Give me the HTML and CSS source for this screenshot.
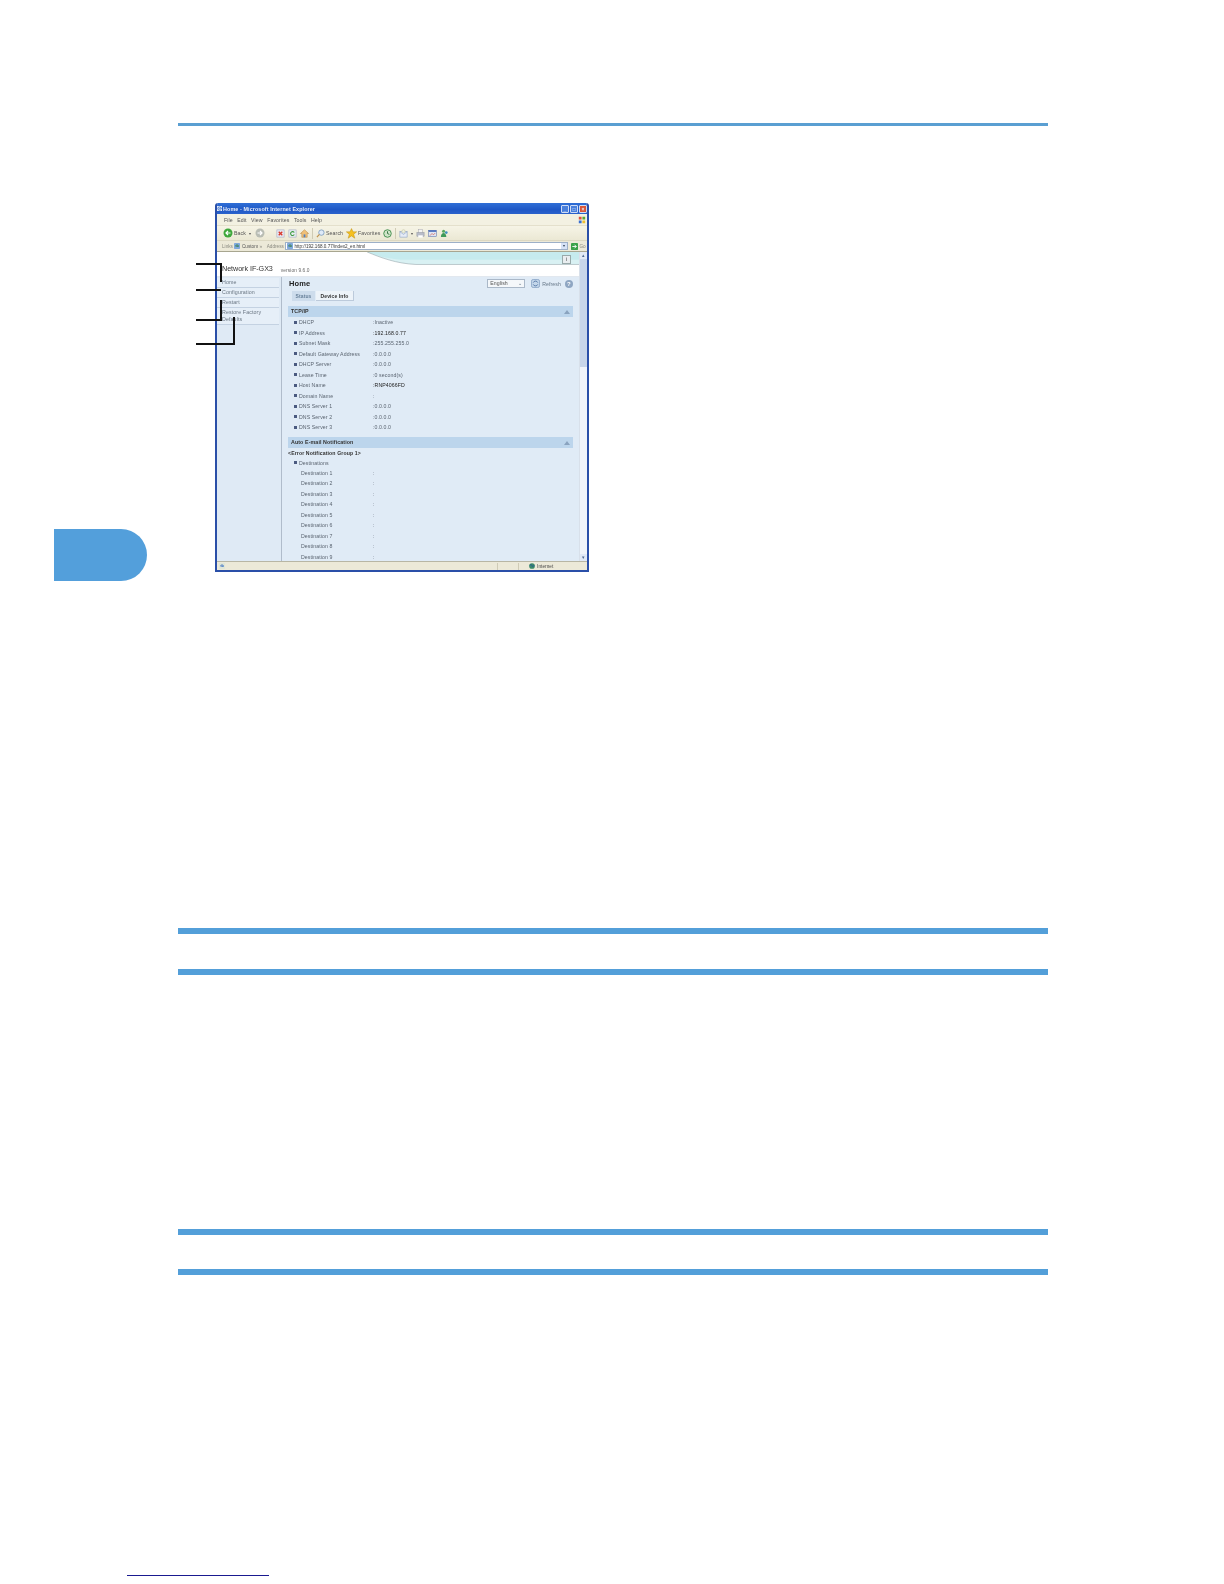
FILE: index.html
```html
<!DOCTYPE html>
<html lang="en">
<head>
    <meta charset="UTF-8">
    <title>Network IF-GX3</title>
    <link rel="stylesheet" href="styles.css">
</head>
<body>
    <div class="sheet">
        <div class="side">
            <div class="chapter-tab"></div>
        </div>
        <div class="content">
            <div class="rule rule-top"></div>
            <div class="figure">
                <div class="callout c1"></div>
                <div class="callout c2"></div>
                <div class="callout c3"></div>
                <div class="callout c4"></div>
                <div class="window">
                    <div class="titlebar">
                        <svg class="ie-mini" viewBox="0 0 8 8"><rect width="8" height="8" fill="#e8eef8"/><path d="M1 4.500a3 3 0 0 1 6 0H2.500M6.500 6a3 3 0 0 1-5-1" fill="none" stroke="#2a62c0" stroke-width="1.200"/></svg>
                        <span class="title-text">Home - Microsoft Internet Explorer</span>
                        <div class="win-btns">
                            <span class="win-btn">_</span>
                            <span class="win-btn">□</span>
                            <span class="win-btn close">×</span>
                        </div>
                    </div>
                    <div class="menubar">
                        <span>File</span><span>Edit</span><span>View</span><span>Favorites</span><span>Tools</span><span>Help</span>
                        <svg class="flag" viewBox="0 0 10 10"><path d="M1 1h3.500v3.500H1z" fill="#e0503a"/><path d="M5.500 1H9v3.500H5.500z" fill="#5aa838"/><path d="M1 5.500h3.500V9H1z" fill="#3a6fd0"/><path d="M5.500 5.500H9V9H5.500z" fill="#f0c030"/></svg>
                    </div>
                    <div class="toolbar">
                        <svg class="tool round" viewBox="0 0 10 10"><circle cx="5" cy="5" r="4.500" fill="#3fa83c"/><path d="M7.500 5H3M5 3 3 5l2 2" fill="none" stroke="#fff" stroke-width="1.200"/></svg>
                        <span class="tool-label">Back</span>
                        <span class="caret">▾</span>
                        <svg class="tool round fwd" viewBox="0 0 10 10"><circle cx="5" cy="5" r="4.500" fill="#b9bdb4"/><path d="M2.500 5H7M5 3l2 2-2 2" fill="none" stroke="#fff" stroke-width="1.200"/></svg>
                        <svg class="tool stop" viewBox="0 0 10 10"><rect x="1" y="1" width="8" height="8" fill="#e9e9f2" stroke="#9aa3c0" stroke-width=".6"/><path d="M3 3l4 4M7 3 3 7" stroke="#d8362a" stroke-width="1.500"/></svg>
                        <svg class="tool" viewBox="0 0 10 10"><rect x="1" y="1" width="8" height="8" fill="#e9eef2" stroke="#9aa3c0" stroke-width=".6"/><path d="M7 4a2.200 2.200 0 1 0 0 2.200" fill="none" stroke="#3c9a40" stroke-width="1.200"/></svg>
                        <svg class="tool" viewBox="0 0 10 10"><path d="M5 .8.500 5H2v4.200h6V5h1.500z" fill="#f0c078" stroke="#b07830" stroke-width=".5"/><rect x="4" y="6" width="2" height="3.200" fill="#5080c0"/></svg>
                        <span class="divider"></span>
                        <svg class="tool" viewBox="0 0 10 10"><circle cx="6" cy="4" r="3" fill="#dfeaf8" stroke="#6a90b8" stroke-width=".8"/><path d="M3.800 6 1 9" stroke="#c09048" stroke-width="1.300"/></svg>
                        <span class="tool-label">Search</span>
                        <svg class="tool star" viewBox="0 0 10 10"><path d="m5 .5 1.400 3H9.700L7 5.600 8 9.300 5 7.200 2 9.300l1-3.700L.3 3.500h3.300z" fill="#f5c020" stroke="#b88a10" stroke-width=".4"/></svg>
                        <span class="tool-label">Favorites</span>
                        <svg class="tool" viewBox="0 0 10 10"><circle cx="5" cy="5" r="4.200" fill="#cfe4c8" stroke="#3c8a48"/><path d="M5 2.500V5l2 1" fill="none" stroke="#2a6a38"/></svg>
                        <span class="divider"></span>
                        <svg class="tool" viewBox="0 0 10 10"><rect x="1" y="3" width="8" height="6" fill="#e6ecf6" stroke="#8098c0" stroke-width=".6"/><path d="m1 3 4 3 4-3" fill="none" stroke="#8098c0" stroke-width=".6"/><circle cx="5" cy="2.500" r="1.800" fill="#eef2e0" stroke="#b0b080" stroke-width=".4"/></svg>
                        <span class="caret">▾</span>
                        <svg class="tool" viewBox="0 0 10 10"><rect x="3" y="0.500" width="4" height="4" fill="#f4f4f4" stroke="#a0a0a8" stroke-width=".5"/><rect x="1" y="4" width="8" height="4" fill="#b8bcc8" stroke="#8a8e9c" stroke-width=".5"/><rect x="2.500" y="7" width="5" height="2.500" fill="#fff"/></svg>
                        <svg class="tool" viewBox="0 0 10 10"><rect x=".8" y="1.500" width="8.400" height="7" fill="#dfe6f4" stroke="#5a70a8" stroke-width=".6"/><rect x=".8" y="1.500" width="8.400" height="1.600" fill="#3a62b8"/><path d="M2 7.500 4.500 5 6 6.500 8 4.500" fill="none" stroke="#d05040" stroke-width=".7"/></svg>
                        <svg class="tool" viewBox="0 0 10 10"><circle cx="4" cy="2.500" r="1.700" fill="#58a860"/><circle cx="7" cy="4" r="1.500" fill="#3f8fc0"/><path d="M1 9c0-3 1.500-4.500 3-4.500S7 6 7 9z" fill="#3f9a5a"/></svg>
                    </div>
                    <div class="addressbar">
                        <span class="addr-label">Links</span>
                        <svg class="tiny" viewBox="0 0 8 8"><rect width="8" height="8" rx="1" fill="#7fa8dc"/><path d="M2 4.500a2 2 0 1 1 4 0H3" fill="none" stroke="#2f7a3a"/></svg>
                        <span class="addr-label dark">Custom</span>
                        <span class="addr-label chev">»</span>
                        <span class="addr-label addr-word">Address</span>
                        <div class="addr-input">
                            <svg class="tiny" viewBox="0 0 8 8"><rect width="8" height="8" rx="1" fill="#7fa8dc"/><path d="M2 4.500a2 2 0 1 1 4 0H3" fill="none" stroke="#2f7a3a"/></svg>
                            <span>http://192.168.0.77/index2_en.html</span>
                            <span class="addr-drop">▾</span>
                        </div>
                        <svg class="go" viewBox="0 0 8 8"><rect width="8" height="8" rx="1" fill="#3aa048"/><path d="M1.500 4H6M4 2l2 2-2 2" fill="none" stroke="#fff"/></svg>
                        <span class="addr-label">Go</span>
                    </div>
                    <div class="viewport">
                        <div class="page">
                            <div class="banner">
                                <svg class="swoosh" viewBox="0 0 364 25" preserveAspectRatio="none">
                                    <path d="M151 0c14 6 29 12 49 13h164V0z" fill="#d9f1f3"/>
                                    <path d="M151 0c10 4 20 7 34 8h179V0z" fill="#c6ebee"/>
                                    <path d="M151 0c14 6 29 12 49 13h164" fill="none" stroke="#9aa8ad" stroke-width=".6"/>
                                </svg>
                                <span class="info-btn">i</span>
                                <span class="product">Network IF-GX3</span>
                                <span class="version">version 9.6.0</span>
                            </div>
                            <div class="split">
                                <div class="nav">
                                    <div class="nav-item">Home</div>
                                    <div class="nav-item">Configuration</div>
                                    <div class="nav-item">Restart</div>
                                    <div class="nav-item">Restore Factory Defaults</div>
                                </div>
                                <div class="main">
                                    <div class="main-head">
                                        <h1>Home</h1>
                                        <span class="lang">English<i>⌄</i></span>
                                        <svg class="refresh" viewBox="0 0 10 10"><rect x=".5" y=".5" width="9" height="9" rx="2" fill="#c3d6ea" stroke="#6f8fb8" stroke-width=".7"/><path d="M7.500 4A2.700 2.700 0 0 0 2.500 4M2.500 6a2.700 2.700 0 0 0 5 0" fill="none" stroke="#4f73a3"/></svg>
                                        <span class="refresh-text">Refresh</span>
                                        <span class="help">?</span>
                                    </div>
                                    <div class="tabs">
                                        <span class="tab">Status</span>
                                        <span class="tab on">Device Info</span>
                                    </div>
                                    <div class="sec-head">TCP/IP<span class="sec-arrow"></span></div>
                                    <div class="row"><b class="sq"></b><span class="key">DHCP</span><span class="val">:Inactive</span></div>
                                    <div class="row"><b class="sq"></b><span class="key">IP Address</span><span class="val strong">:192.168.0.77</span></div>
                                    <div class="row"><b class="sq"></b><span class="key">Subnet Mask</span><span class="val">:255.255.255.0</span></div>
                                    <div class="row"><b class="sq"></b><span class="key">Default Gateway Address</span><span class="val">:0.0.0.0</span></div>
                                    <div class="row"><b class="sq"></b><span class="key">DHCP Server</span><span class="val">:0.0.0.0</span></div>
                                    <div class="row"><b class="sq"></b><span class="key">Lease Time</span><span class="val">:0 second(s)</span></div>
                                    <div class="row"><b class="sq"></b><span class="key">Host Name</span><span class="val strong">:RNP4066FD</span></div>
                                    <div class="row"><b class="sq"></b><span class="key">Domain Name</span><span class="val">:</span></div>
                                    <div class="row"><b class="sq"></b><span class="key">DNS Server 1</span><span class="val">:0.0.0.0</span></div>
                                    <div class="row"><b class="sq"></b><span class="key">DNS Server 2</span><span class="val">:0.0.0.0</span></div>
                                    <div class="row"><b class="sq"></b><span class="key">DNS Server 3</span><span class="val">:0.0.0.0</span></div>
                                    <div class="sec-head second">Auto E-mail Notification<span class="sec-arrow"></span></div>
                                    <div class="group">&lt;Error Notification Group 1&gt;</div>
                                    <div class="row short"><b class="sq"></b><span class="key">Destinations</span></div>
                                    <div class="row sub"><span class="key">Destination 1</span><span class="val">:</span></div>
                                    <div class="row sub"><span class="key">Destination 2</span><span class="val">:</span></div>
                                    <div class="row sub"><span class="key">Destination 3</span><span class="val">:</span></div>
                                    <div class="row sub"><span class="key">Destination 4</span><span class="val">:</span></div>
                                    <div class="row sub"><span class="key">Destination 5</span><span class="val">:</span></div>
                                    <div class="row sub"><span class="key">Destination 6</span><span class="val">:</span></div>
                                    <div class="row sub"><span class="key">Destination 7</span><span class="val">:</span></div>
                                    <div class="row sub"><span class="key">Destination 8</span><span class="val">:</span></div>
                                    <div class="row sub"><span class="key">Destination 9</span><span class="val">:</span></div>
                                </div>
                            </div>
                        </div>
                        <div class="scrollbar">
                            <span class="arrow">▴</span>
                            <div class="thumb"></div>
                            <span class="arrow end">▾</span>
                        </div>
                    </div>
                    <div class="statusbar">
                        <svg class="tiny" viewBox="0 0 8 8"><rect width="8" height="8" fill="#dfe6d8"/><path d="M2 4.500a2 2 0 1 1 4 0H3" fill="none" stroke="#2a62c0"/></svg>
                        <span class="status-cell wide"></span>
                        <span class="status-cell"></span>
                        <span class="status-zone">
                            <svg class="globe" viewBox="0 0 8 8"><circle cx="4" cy="4" r="3.800" fill="#3a8a68"/><path d="M1 3c2-2 3 0 3 1s2 1 3-1" fill="none" stroke="#2a4f9f"/></svg>
                            Internet
                        </span>
                    </div>
                </div>
            </div>
            <div class="rule rule-a"></div>
            <div class="rule rule-b"></div>
            <div class="rule rule-c"></div>
            <div class="rule rule-d"></div>
        </div>
    </div>
    <div class="footnote-line"></div>
</body>
</html>
```

FILE: styles.css
```css
html, body {
    margin: 0;
    padding: 0;
    background: #fff;
}
body {
    font-family: "Liberation Sans", Arial, sans-serif;
    width: 1224px;
    height: 1584px;
    overflow: hidden;
}
.sheet {
    display: flex;
    height: 1575px;
}
.side {
    width: 124px;
    padding-left: 54px;
}
.chapter-tab {
    width: 93px;
    height: 52px;
    margin-top: 529px;
    background: #539fdb;
    border-radius: 0 26px 26px 0;
}
.content {
    width: 870px;
    padding-top: 123px;
}
.rule {
    background: #539fd9;
    height: 6px;
}
.rule-top {
    height: 3px;
    background: #5a9fd2;
}
.rule-a { margin-top: 356px; }
.rule-b { margin-top: 35px; }
.rule-c { margin-top: 254px; }
.rule-d { margin-top: 34px; }
.footnote-line {
    width: 142px;
    height: 1px;
    margin-left: 127px;
    background: #1a1a90;
}

/* screenshot figure */
.figure {
    position: relative;
    margin: 77px 0 0 37px;
    width: 374px;
    height: 369px;
}
.callout {
    position: absolute;
    z-index: 2;
    border: solid #111;
    border-width: 2px 2px 0 0;
}
.c1 { left: -19px; top: 60px; width: 24px; height: 17px; }
.c2 { left: -19px; top: 86px; width: 25px; height: 0; border-right: 0; }
.c3 { left: -19px; top: 97px; width: 24px; height: 19px; border-width: 0 2px 2px 0; }
.c4 { left: -19px; top: 114px; width: 37px; height: 26px; border-width: 0 2px 2px 0; }

.window {
    width: 374px;
    height: 369px;
    box-sizing: border-box;
    display: flex;
    flex-direction: column;
    background: #ece9d8;
    border: solid #2a4fa8;
    border-width: 0 2px 2px;
    border-radius: 3px 3px 0 0;
    font-size: 5.2px;
    letter-spacing: 0.1px;
    color: #555;
    overflow: hidden;
    filter: blur(0.4px);
}
.titlebar {
    display: flex;
    align-items: center;
    height: 11px;
    flex: none;
    margin: 0 -2px;
    padding: 0 2px;
    background: linear-gradient(#2f6fd6, #1f58c6 60%, #2a62cc);
    color: #e8eefa;
    font-weight: bold;
    font-size: 5.4px;
}
.ie-mini { width: 5px; height: 5px; margin-right: 1px; }
.win-btns { margin-left: auto; display: flex; gap: 1px; }
.win-btn {
    width: 8px;
    height: 8px;
    line-height: 7px;
    text-align: center;
    background: #4a80dc;
    border: 1px solid #cfdcf5;
    box-sizing: border-box;
    font-size: 5px;
    border-radius: 1px;
}
.close { background: #d9583a; }
.menubar {
    display: flex;
    align-items: center;
    gap: 4.500px;
    height: 11px;
    flex: none;
    padding-left: 7px;
    background: #f3f1e2;
    color: #555;
}
.flag { width: 8px; height: 8px; margin-left: auto; margin-right: 1px; }
.toolbar {
    display: flex;
    align-items: center;
    gap: 3px;
    height: 15px;
    flex: none;
    padding-left: 6px;
    background: linear-gradient(#f6f4e6, #ebe8d4);
    border-top: 1px solid #e4e0cc;
    box-sizing: border-box;
}
.tool { width: 9px; height: 9px; flex: none; }
.tool.round { width: 10px; height: 10px; }
.tool.fwd { margin-left: 1px; margin-right: 5px; }
.tool.stop { margin-left: 3px; }
.tool.star { width: 11px; height: 11px; margin-left: 0; }
.tool-label { margin-left: -2px; }
.caret { font-size: 4px; }
.divider { width: 1px; height: 11px; background: #cfcbb4; }
.addressbar {
    display: flex;
    align-items: center;
    gap: 1.500px;
    height: 12px;
    flex: none;
    padding-left: 5px;
    background: #ece9d8;
    border-top: 1px solid #dcd8c2;
    border-bottom: 1px solid #a8a690;
    color: #8a8a80;
    font-size: 4.7px;
    letter-spacing: 0;
    box-sizing: border-box;
}
.addr-label.dark { color: #555; }
.addr-word { margin-left: 3px; }
.tiny { width: 6px; height: 6px; flex: none; }
.addr-input {
    display: flex;
    align-items: center;
    gap: 1px;
    width: 283px;
    height: 8px;
    background: #fff;
    border: 1px solid #9db0c8;
    box-sizing: border-box;
    color: #333;
    font-size: 4.6px;
    padding-left: 1px;
}
.addr-drop {
    margin-left: auto;
    width: 6px;
    height: 6px;
    line-height: 6px;
    text-align: center;
    font-size: 4px;
    color: #345;
    background: #d6e2f6;
}
.go { width: 7px; height: 7px; flex: none; margin-left: 1px; }

/* page inside the browser */
.viewport {
    display: flex;
    flex: 1;
    min-height: 0;
    background: #fff;
}
.page {
    flex: 1;
    min-width: 0;
    display: flex;
    flex-direction: column;
}
.banner {
    position: relative;
    height: 25px;
    flex: none;
    display: flex;
    align-items: flex-end;
    padding: 0 0 3px 5px;
    box-sizing: border-box;
    background: #fff;
    border-bottom: 1px solid #e2e8ef;
}
.swoosh {
    position: absolute;
    left: 0;
    top: 0;
    width: 100%;
    height: 100%;
}
.info-btn {
    position: absolute;
    right: 8px;
    top: 3px;
    width: 7px;
    height: 7px;
    line-height: 7px;
    text-align: center;
    background: #e9eef0;
    border: 1px solid #9aa;
    color: #333;
    font-size: 5px;
}
.product {
    position: relative;
    font-size: 7.2px;
    color: #333;
    letter-spacing: -0.05px;
}
.version {
    position: relative;
    margin-left: 8px;
    font-size: 4.8px;
    color: #666;
}
.split {
    display: flex;
    flex: 1;
    min-height: 0;
}
.nav {
    width: 65px;
    flex: none;
    padding: 1px 2px 0 0;
    background: #dfeaf5;
    border-right: 1px solid #b0bccb;
    box-sizing: border-box;
}
.nav-item {
    padding: 1px 12px 1px 5px;
    border: solid #c4d2e2;
    border-width: 0 0 1px 0;
    background: #e6eff8;
    color: #6a7683;
    font-size: 5.3px;
    line-height: 7px;
    min-height: 7px;
}
.main {
    flex: 1;
    min-width: 0;
    padding: 0 6px;
    background: #e0ebf6;
    overflow: hidden;
}
.main-head {
    display: flex;
    align-items: center;
    height: 13px;
    padding-left: 1px;
}
h1 {
    margin: 0;
    font-size: 7.5px;
    color: #222;
}
.lang {
    display: flex;
    justify-content: space-between;
    margin-left: auto;
    width: 38px;
    height: 9px;
    padding: 0 2px;
    box-sizing: border-box;
    background: #f4f7fa;
    border: 1px solid #aab8c8;
    line-height: 7px;
    color: #555;
}
.lang i { font-style: normal; color: #567; }
.refresh { width: 9px; height: 9px; margin-left: 6px; }
.refresh-text { margin-left: 2px; color: #678; }
.help {
    width: 8px;
    height: 8px;
    line-height: 8px;
    margin: 0 0 0 4px;
    text-align: center;
    border-radius: 50%;
    background: #8fa6c2;
    color: #fff;
    font-weight: bold;
    font-size: 6px;
}
.tabs {
    display: flex;
    height: 10px;
    padding-left: 4px;
    margin-top: 1px;
}
.tab {
    width: 23px;
    text-align: center;
    line-height: 10px;
    color: #68819a;
    background: #cddcec;
    font-weight: bold;
    font-size: 5px;
}
.tab.on {
    width: 37px;
    margin-left: 1px;
    color: #333;
    background: #edf3f9;
    border: solid #bccadb;
    border-width: 0 1px 1px 0;
}
.sec-head {
    position: relative;
    height: 11px;
    line-height: 11px;
    margin-top: 5px;
    padding-left: 3px;
    background: #bcd5ec;
    color: #333;
    font-weight: bold;
    font-size: 5.3px;
}
.sec-head.second { margin-top: 4px; }
.sec-arrow {
    position: absolute;
    right: 3px;
    top: 4px;
    border: solid transparent;
    border-width: 0 3px 4px;
    border-bottom-color: #8aa3bf;
}
.group {
    height: 10px;
    line-height: 10px;
    color: #333;
    font-weight: bold;
    font-size: 5.2px;
}
.row {
    display: flex;
    align-items: center;
    height: 10.500px;
    padding-left: 6px;
    color: #5a6470;
}
.row.short { height: 10px; }
.sq {
    width: 3px;
    height: 3px;
    margin-right: 2px;
    background: #4a5a80;
}
.key { width: 74px; }
.row.sub .key { padding-left: 7px; width: 72px; }
.val { color: #5a6470; }
.val.strong { color: #222; }
.scrollbar {
    width: 8px;
    flex: none;
    display: flex;
    flex-direction: column;
    background: #f0f4fa;
    border-left: 1px solid #d8e0ea;
    box-sizing: border-box;
}
.arrow {
    height: 7px;
    line-height: 7px;
    text-align: center;
    font-size: 5px;
    color: #4f6a90;
    background: #e1e9f6;
}
.arrow.end { margin-top: auto; }
.thumb {
    height: 108px;
    background: #c8d6ea;
}
.statusbar {
    display: flex;
    align-items: center;
    height: 9px;
    flex: none;
    padding-left: 2px;
    background: #ece9d8;
    border-top: 1px solid #b8b6a4;
    box-sizing: border-box;
}
.status-cell {
    height: 7px;
    width: 20px;
    border-left: 1px solid #cfcbb6;
}
.status-cell.wide { width: 272px; border: 0; }
.status-zone {
    display: flex;
    align-items: center;
    gap: 2px;
    height: 7px;
    padding-left: 10px;
    border-left: 1px solid #cfcbb6;
    font-size: 4.6px;
    color: #444;
}
.globe { width: 6px; height: 6px; }
```
